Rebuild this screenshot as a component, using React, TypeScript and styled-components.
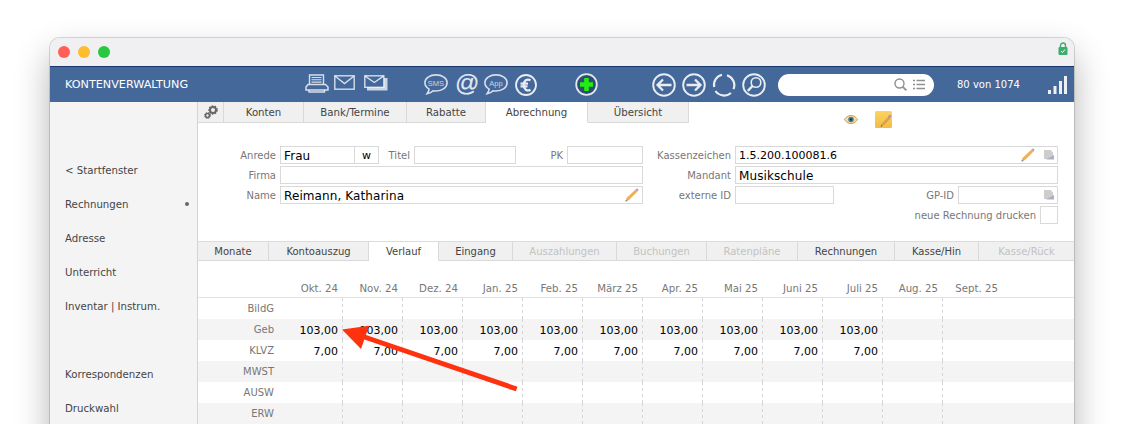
import React from 'react';
import styled, { createGlobalStyle } from 'styled-components';

const GlobalStyle = createGlobalStyle`
  html, body {
    margin: 0;
    height: 424px;
    overflow: hidden;
    background: #fff;
    font-family: "DejaVu Sans", Verdana, sans-serif;
  }
`;

const Page = styled.div`
  padding: 38px 0 0 50px;
  height: 424px;
  box-sizing: border-box;
  overflow: hidden;
`;

const Window = styled.div`
  width: 1024px;
  height: 500px;
  border-radius: 10px 10px 0 0;
  overflow: hidden;
  background: #fff;
  box-shadow: 0 0 0 1px rgba(0, 0, 0, 0.14), 0 16px 34px rgba(0, 0, 0, 0.3);
`;

const TitleBar = styled.div`
  height: 28px;
  background: #f0f0f2;
  display: flex;
  align-items: center;
  padding: 0 6px 0 8px;
  gap: 8px;
`;

const TrafficLight = styled.span<{ $color: string }>`
  width: 12px;
  height: 12px;
  border-radius: 50%;
  background: ${p => p.$color};
`;

const LockSlot = styled.span`
  margin-left: auto;
  display: flex;
  margin-top: -8px;
`;

const Header = styled.div`
  height: 36px;
  box-sizing: border-box;
  background: #44689a;
  border-top: 1px solid #17386b;
  display: flex;
  align-items: center;
  color: #fff;
`;

const AppTitle = styled.div`
  width: 255px;
  padding-left: 15px;
  box-sizing: border-box;
  font-size: 11.2px;
`;

const IconSlot = styled.span<{ $ml: number; $up?: number }>`
  display: flex;
  margin-left: ${p => p.$ml}px;
  margin-bottom: ${p => p.$up ?? 0}px;
`;

const AtGlyph = styled.span`
  width: 22px;
  text-align: center;
  font-family: "Liberation Sans", Arial, sans-serif;
  font-size: 24px;
  line-height: 22px;
  color: rgba(255, 255, 255, 0.85);
  -webkit-text-stroke: 0.2px rgba(255, 255, 255, 0.85);
`;

const SearchPill = styled.div`
  margin-left: 12px;
  width: 156px;
  height: 22px;
  border-radius: 11px;
  background: #fff;
  display: flex;
  align-items: center;
  justify-content: flex-end;
  gap: 6px;
  padding-right: 9px;
  box-sizing: border-box;
`;

const Counter = styled.div`
  margin-left: 23px;
  width: 91px;
  font-size: 10px;
`;

const Body = styled.div`
  display: flex;
  height: 436px;
`;

const Sidebar = styled.nav`
  width: 148px;
  box-sizing: border-box;
  background: #f4f4f4;
  border-right: 1px solid #d4d4d4;
  padding-top: 51px;
  display: flex;
  flex-direction: column;
`;

const NavItem = styled.div<{ $gapBefore?: boolean }>`
  height: 34px;
  margin-top: ${p => (p.$gapBefore ? '34px' : '0')};
  padding: 0 8px 0 15px;
  display: flex;
  align-items: center;
  justify-content: space-between;
  font-size: 10.2px;
  color: #444;
`;

const NavDot = styled.span`
  width: 4px;
  height: 4px;
  border-radius: 50%;
  background: #666;
`;

const Content = styled.main`
  flex: 1;
  min-width: 0;
`;

const TopTabRow = styled.div`
  display: flex;
  height: 21px;
`;

const TopTab = styled.div<{ $w: number; $active?: boolean }>`
  width: ${p => p.$w}px;
  box-sizing: border-box;
  display: flex;
  align-items: center;
  justify-content: center;
  font-size: 10.2px;
  color: #444;
  background: ${p => (p.$active ? '#fff' : '#f0f0f0')};
  border-right: 1px solid #d9d9d9;
  border-bottom: 1px solid ${p => (p.$active ? '#fff' : '#d9d9d9')};
`;

const TrayIcons = styled.div`
  display: flex;
  align-items: flex-start;
  padding: 9px 0 0 155px;
  gap: 17px;
  position: relative;
`;

const EyeSlot = styled.span`
  display: flex;
  margin-top: 4px;
`;

const FormArea = styled.section`
  height: 118px;
  box-sizing: border-box;
  padding-top: 23px;
  display: flex;
`;

const FormColumn = styled.div<{ $w: number; $label: number }>`
  width: ${p => p.$w}px;
  --label-width: ${p => p.$label}px;
  display: flex;
  flex-direction: column;
  gap: 2px;
`;

const FormRow = styled.div`
  display: flex;
  align-items: center;
  height: 18px;
`;

const FormLabel = styled.label<{ $w?: number }>`
  width: ${p => (p.$w ? `${p.$w}px` : 'var(--label-width)')};
  flex: none;
  text-align: right;
  padding-right: 4px;
  box-sizing: border-box;
  white-space: nowrap;
  font-size: 10px;
  color: #777;
`;

const Field = styled.div<{ $w?: number; $numeric?: boolean }>`
  ${p => (p.$w ? `width: ${p.$w}px; flex: none;` : 'flex: 1;')}
  height: 18px;
  box-sizing: border-box;
  border: 1px solid #d9d9d9;
  display: flex;
  align-items: center;
  padding: 1px 3px 0;
  gap: 7px;
  font-size: ${p => (p.$numeric ? '11px' : '12px')};
  letter-spacing: ${p => (p.$numeric ? '0' : '0.1px')};
  color: #000;
  white-space: nowrap;
`;

const GenderCell = styled.span`
  width: 23px;
  height: 16px;
  margin: -1px -3px 0 auto;
  border-left: 1px solid #d9d9d9;
  display: flex;
  align-items: center;
  justify-content: center;
  font-size: 11px;
`;

const FieldIcons = styled.span`
  margin: -1px 0 0 auto;
  display: flex;
  align-items: center;
  gap: 9px;
`;

const SubTabRow = styled.div`
  display: flex;
  height: 20px;
  box-sizing: border-box;
  border-top: 1px solid #dcdcdc;
  background: #f0f0f0;
`;

const SubTab = styled.div<{ $w: number; $active?: boolean; $disabled?: boolean }>`
  width: ${p => p.$w}px;
  height: 19px;
  box-sizing: border-box;
  display: flex;
  align-items: center;
  justify-content: center;
  font-size: 10px;
  color: ${p => (p.$disabled ? '#c2c2c2' : '#444')};
  background: ${p => (p.$active ? '#fff' : '#f0f0f0')};
  border-right: 1px solid #d9d9d9;
  border-bottom: 1px solid ${p => (p.$active ? '#fff' : '#d9d9d9')};
  &:last-child {
    border-right: none;
  }
`;

const Sheet = styled.div`
  position: relative;
`;

const MonthRow = styled.div`
  display: flex;
  height: 37px;
  box-sizing: border-box;
  padding: 22px 0 0 85px;
  border-bottom: 1px solid #e2e2e2;
`;

const MonthCell = styled.div`
  width: 60px;
  flex: none;
  box-sizing: border-box;
  padding-right: 5px;
  text-align: right;
  font-size: 10.2px;
  color: #777;
`;

const DataRow = styled.div<{ $alt: boolean }>`
  display: flex;
  height: 21px;
  align-items: stretch;
  background: ${p => (p.$alt ? '#f4f4f4' : '#fff')};
`;

const RowLabel = styled.div`
  width: 85px;
  flex: none;
  box-sizing: border-box;
  padding-right: 9px;
  text-align: right;
  line-height: 21px;
  font-size: 10px;
  color: #777;
`;

const ValueCell = styled.div<{ $last: boolean }>`
  width: 60px;
  flex: none;
  box-sizing: border-box;
  padding-right: 5px;
  text-align: right;
  line-height: 23px;
  font-size: 11px;
  color: #000;
  ${p =>
    p.$last
      ? ''
      : `background: repeating-linear-gradient(to bottom, #d6d6d6 0 3px, transparent 3px 6px) right top / 1px 100% no-repeat;`}
`;

const ArrowOverlay = styled.svg`
  position: absolute;
  left: 0;
  top: 0;
  pointer-events: none;
`;

const line = { fill: 'none', stroke: '#fff', strokeOpacity: 0.78 };

const PrinterIcon = () => (
  <svg width="24" height="19" viewBox="0 0 24 19" {...line} strokeWidth="1.4">
    <path d="M4.500 10V1h14v9" />
    <path d="M6.500 3.500h10M6.500 5.800h10M6.500 8.100h10" strokeWidth="1.100" />
    <path d="M3 10.500h17.500l2.500 2.500v3H1v-3z" strokeWidth="1.500" />
    <path d="M4 16v2h15.500v-2" />
  </svg>
);

const MailIcon = () => (
  <svg width="21" height="15" viewBox="0 0 21 15" {...line} strokeWidth="1.4">
    <rect x="0.800" y="0.800" width="19.400" height="13.400" />
    <path d="M1.200 1.200 10.500 8.500l9.300-7.300" />
  </svg>
);

const MailStackIcon = () => (
  <svg width="24" height="16" viewBox="0 0 24 16">
    <path d="M3 11v4.500h20.500V3H20v8z" fill="#fff" fillOpacity="0.72" />
    <rect x="0.800" y="0.800" width="19" height="11.500" fill="#44689a" stroke="#fff" strokeOpacity="0.78" strokeWidth="1.400" />
    <path d="M1.200 1.200 10.300 7.500l9.100-6.300" {...line} strokeWidth="1.400" />
  </svg>
);

const BubbleIcon = ({ label }: { label: string }) => (
  <svg width="24" height="21" viewBox="0 0 24 21">
    <path
      d="M12 .9C5.800.9.900 4.300.900 8.800c0 2.600 1.600 4.800 4.200 6.300-.2 1.800-.9 3.200-2 4.700 2.500-.4 4.700-1.500 6-3 1 .2 1.900.2 2.900.2 6.200 0 11.100-3.500 11.100-8.200S18.200.9 12 .9z"
      {...line}
      strokeWidth="1.600"
    />
    <text x="12" y="11.500" textAnchor="middle" fontSize="7.500" fill="#fff" fillOpacity="0.72" fontFamily="Liberation Sans, sans-serif">
      {label}
    </text>
  </svg>
);

const EuroIcon = () => (
  <svg width="22" height="22" viewBox="0 0 22 22" {...line} strokeOpacity="0.88">
    <circle cx="11" cy="11" r="10" strokeWidth="1.800" />
    <path d="M15.500 6.300c-3.500-2-6.800.3-6.800 4.700s3.300 6.700 6.800 4.700M5.500 9.700h7.500M5.500 12.300h7" strokeWidth="2.200" />
  </svg>
);

const PlusIcon = () => (
  <svg width="23" height="23" viewBox="0 0 23 23">
    <circle cx="11.500" cy="11.500" r="10.300" fill="#2f4d74" stroke="#fff" strokeOpacity="0.85" strokeWidth="1.800" />
    <path d="M9.200 5h4.600v4.200H18v4.600h-4.200V18H9.200v-4.200H5V9.200h4.200z" fill="#22ee11" />
  </svg>
);

const ArrowIcon = ({ dir }: { dir: 'left' | 'right' }) => (
  <svg width="24" height="24" viewBox="0 0 24 24" {...line} strokeOpacity="0.88">
    <circle cx="12" cy="12" r="10.800" strokeWidth="1.900" />
    <path
      d={dir === 'left' ? 'M19.500 12H5.500M11 6.500 5.500 12l5.500 5.500' : 'M4.500 12h14M13 6.500l5.500 5.500-5.500 5.500'}
      strokeWidth="2.300"
    />
  </svg>
);

const RefreshIcon = () => (
  <svg width="24" height="24" viewBox="0 0 24 24" {...line} strokeOpacity="0.88" strokeWidth="2.200">
    <path d="M15 2.200a10.500 10.500 0 0 1 6.500 14" />
    <path d="M19 20a10.500 10.500 0 0 1-15.500-2" />
    <path d="M2.200 14A10.500 10.500 0 0 1 10 1.700" />
  </svg>
);

const LoupeIcon = () => (
  <svg width="24" height="24" viewBox="0 0 24 24" {...line} strokeOpacity="0.88">
    <circle cx="12" cy="12" r="10.800" strokeWidth="1.900" />
    <circle cx="14" cy="9.500" r="4.800" strokeWidth="1.600" />
    <path d="M10.500 13 5.800 17.800" strokeWidth="2.400" />
  </svg>
);

const SearchGlyph = () => (
  <svg width="13" height="13" viewBox="0 0 13 13" fill="none" stroke="#8f8f8f" strokeWidth="1.400">
    <circle cx="5.500" cy="5.500" r="4.500" />
    <path d="m8.800 8.800 3.600 3.600" strokeWidth="1.800" />
  </svg>
);

const ListGlyph = () => (
  <svg width="12" height="11" viewBox="0 0 12 11" fill="none" stroke="#8f8f8f" strokeWidth="1.400">
    <path d="M0 1.500h2M3.500 1.500H12M0 5.500h2M3.500 5.500H12M0 9.500h2M3.500 9.500H12" />
  </svg>
);

const SignalIcon = () => (
  <svg width="19" height="18" viewBox="0 0 19 18" fill="#fff" fillOpacity="0.9">
    <rect x="0" y="14" width="3" height="4" />
    <rect x="5.500" y="10" width="3" height="8" />
    <rect x="11" y="5" width="3" height="13" />
    <rect x="16" y="0" width="3" height="18" />
  </svg>
);

const LockIcon = () => (
  <svg width="10" height="13" viewBox="0 0 10 13">
    <path d="M2.500 6V3.500a2.500 2.500 0 0 1 5 0V6" fill="none" stroke="#3cae6c" strokeWidth="1.400" />
    <rect x="0.500" y="5" width="9" height="8" rx="1" fill="#3cae6c" />
    <path d="m3 9 1.500 1.500L7 7.500" fill="none" stroke="#fff" strokeWidth="1" />
  </svg>
);

const GearsIcon = () => (
  <svg width="14" height="14" viewBox="0 0 14 14" fill="none" stroke="#666">
    <circle cx="9" cy="5" r="3" strokeWidth="2" />
    <circle cx="9" cy="5" r="4.200" strokeWidth="1.200" strokeDasharray="1.500 1.500" />
    <circle cx="3.500" cy="10.500" r="2" strokeWidth="1.600" />
    <circle cx="3.500" cy="10.500" r="3" strokeWidth="1" strokeDasharray="1.200 1.200" />
  </svg>
);

const EyeIcon = () => (
  <svg width="14" height="9" viewBox="0 0 14 9">
    <path d="M.5 4.500C3 1 5 .5 7 .5s4 .5 6.500 4C11 8 9 8.500 7 8.500S3 8 .5 4.500z" fill="#ecdcae" stroke="#c89a3c" strokeWidth="1" />
    <circle cx="7" cy="4.500" r="2.800" fill="#4f7f93" />
    <circle cx="7" cy="4.500" r="1.200" fill="#1f3642" />
  </svg>
);

const NoteIcon = () => (
  <svg width="17" height="17" viewBox="0 0 17 17">
    <defs>
      <linearGradient id="noteFill" x1="0" y1="0" x2="0" y2="1">
        <stop offset="0" stopColor="#fbd45e" />
        <stop offset="1" stopColor="#f3bb4a" />
      </linearGradient>
    </defs>
    <rect width="17" height="17" rx="1.500" fill="url(#noteFill)" />
    <path d="m6 15 1-2.500 6.500-7 2 2-7 7z" fill="#dda143" />
    <path d="m13 5.500 2-2 1.500 1.500-2 2z" fill="#a88cc8" />
    <path d="m5.500 16 .8-2.200 1.200 1z" fill="#666" />
  </svg>
);

const PencilIcon = () => (
  <svg width="14" height="14" viewBox="0 0 14 14">
    <path d="M.5 13.500 1.500 10 10.500 1.500 12.500 3.500 4 12z" fill="#eeb054" />
    <path d="M10.500 1.500 12 .3 13.700 2 12.500 3.500z" fill="#b49ac8" />
    <path d="M.5 13.500 1 11.800l1.700 1.200z" fill="#777" />
  </svg>
);

const DocIcon = () => (
  <svg width="10" height="10" viewBox="0 0 10 10">
    <path d="M0 0h6.500L9 2.500V9H0z" fill="#cdcdcd" />
    <path d="M2 9.500h8V5z" fill="#a9b2c4" />
  </svg>
);

const navTop = ['< Startfenster', 'Rechnungen', 'Adresse', 'Unterricht', 'Inventar | Instrum.'];
const topTabs: [string, number, boolean?][] = [
  ['Konten', 80],
  ['Bank/Termine', 103],
  ['Rabatte', 79],
  ['Abrechnung', 102, true],
  ['Übersicht', 101],
];
const subTabs: { label: string; w: number; active?: boolean; disabled?: boolean }[] = [
  { label: 'Monate', w: 71 },
  { label: 'Kontoauszug', w: 100 },
  { label: 'Verlauf', w: 70, active: true },
  { label: 'Eingang', w: 74 },
  { label: 'Auszahlungen', w: 104, disabled: true },
  { label: 'Buchungen', w: 90, disabled: true },
  { label: 'Ratenpläne', w: 91, disabled: true },
  { label: 'Rechnungen', w: 97 },
  { label: 'Kasse/Hin', w: 84 },
  { label: 'Kasse/Rück', w: 95, disabled: true },
];
const months = ['Okt. 24', 'Nov. 24', 'Dez. 24', 'Jan. 25', 'Feb. 25', 'März 25', 'Apr. 25', 'Mai 25', 'Juni 25', 'Juli 25', 'Aug. 25', 'Sept. 25'];
const rows: [string, string][] = [
  ['BildG', ''],
  ['Geb', '103,00'],
  ['KLVZ', '7,00'],
  ['MWST', ''],
  ['AUSW', ''],
  ['ERW', ''],
  ['', ''],
];

export default function App() {
  return (
    <>
      <GlobalStyle />
      <Page>
        <Window>
          <TitleBar>
            <TrafficLight $color="#ff5f57" />
            <TrafficLight $color="#febc2e" />
            <TrafficLight $color="#28c840" />
            <LockSlot><LockIcon /></LockSlot>
          </TitleBar>
          <Header>
            <AppTitle>KONTENVERWALTUNG</AppTitle>
            <IconSlot $ml={0} $up={2}><PrinterIcon /></IconSlot>
            <IconSlot $ml={5} $up={4}><MailIcon /></IconSlot>
            <IconSlot $ml={9} $up={3}><MailStackIcon /></IconSlot>
            <IconSlot $ml={36}><BubbleIcon label="SMS" /></IconSlot>
            <IconSlot $ml={7} $up={3}><AtGlyph>@</AtGlyph></IconSlot>
            <IconSlot $ml={7}><BubbleIcon label="App" /></IconSlot>
            <IconSlot $ml={7}><EuroIcon /></IconSlot>
            <IconSlot $ml={38}><PlusIcon /></IconSlot>
            <IconSlot $ml={54}><ArrowIcon dir="left" /></IconSlot>
            <IconSlot $ml={6}><ArrowIcon dir="right" /></IconSlot>
            <IconSlot $ml={6}><RefreshIcon /></IconSlot>
            <IconSlot $ml={6}><LoupeIcon /></IconSlot>
            <SearchPill>
              <SearchGlyph />
              <ListGlyph />
            </SearchPill>
            <Counter>80 von 1074</Counter>
            <SignalIcon />
          </Header>
          <Body>
            <Sidebar>
              {navTop.map(item => (
                <NavItem key={item}>
                  {item}
                  {item === 'Rechnungen' && <NavDot />}
                </NavItem>
              ))}
              <NavItem $gapBefore>Korrespondenzen</NavItem>
              <NavItem>Druckwahl</NavItem>
            </Sidebar>
            <Content>
              <TopTabRow>
                <TopTab $w={26}><GearsIcon /></TopTab>
                {topTabs.map(([label, w, active]) => (
                  <TopTab key={label} $w={w} $active={active}>{label}</TopTab>
                ))}
                <TrayIcons>
                  <EyeSlot><EyeIcon /></EyeSlot>
                  <NoteIcon />
                </TrayIcons>
              </TopTabRow>
              <FormArea>
                <FormColumn $w={445} $label={82}>
                  <FormRow>
                    <FormLabel>Anrede</FormLabel>
                    <Field $w={99}>Frau<GenderCell>w</GenderCell></Field>
                    <FormLabel $w={35}>Titel</FormLabel>
                    <Field $w={102} />
                    <FormLabel $w={51}>PK</FormLabel>
                    <Field />
                  </FormRow>
                  <FormRow>
                    <FormLabel>Firma</FormLabel>
                    <Field />
                  </FormRow>
                  <FormRow>
                    <FormLabel>Name</FormLabel>
                    <Field>Reimann, Katharina<FieldIcons><PencilIcon /></FieldIcons></Field>
                  </FormRow>
                </FormColumn>
                <FormColumn $w={415} $label={92}>
                  <FormRow>
                    <FormLabel>Kassenzeichen</FormLabel>
                    <Field $numeric>1.5.200.100081.6<FieldIcons><PencilIcon /><DocIcon /></FieldIcons></Field>
                  </FormRow>
                  <FormRow>
                    <FormLabel>Mandant</FormLabel>
                    <Field>Musikschule</Field>
                  </FormRow>
                  <FormRow>
                    <FormLabel>externe ID</FormLabel>
                    <Field $w={99} />
                    <FormLabel $w={124}>GP-ID</FormLabel>
                    <Field><FieldIcons><DocIcon /></FieldIcons></Field>
                  </FormRow>
                  <FormRow>
                    <FormLabel $w={397}>neue Rechnung drucken</FormLabel>
                    <Field $w={18} />
                  </FormRow>
                </FormColumn>
              </FormArea>
              <SubTabRow>
                {subTabs.map(tab => (
                  <SubTab key={tab.label} $w={tab.w} $active={tab.active} $disabled={tab.disabled}>
                    {tab.label}
                  </SubTab>
                ))}
              </SubTabRow>
              <Sheet>
                <MonthRow>
                  {months.map(month => <MonthCell key={month}>{month}</MonthCell>)}
                </MonthRow>
                {rows.map(([label, value], r) => (
                  <DataRow key={r} $alt={r % 2 === 1}>
                    <RowLabel>{label}</RowLabel>
                    {months.map((month, i) => (
                      <ValueCell key={month} $last={i === months.length - 1}>
                        {i < 10 ? value : ''}
                      </ValueCell>
                    ))}
                  </DataRow>
                ))}
                <ArrowOverlay width="340" height="140" viewBox="0 0 340 140">
                  <path d="M144 68.500 171 64.700 163 88z" fill="#ff3210" />
                  <path d="M165 75.500 318.700 128" stroke="#ff3210" strokeWidth="5" fill="none" />
                </ArrowOverlay>
              </Sheet>
            </Content>
          </Body>
        </Window>
      </Page>
    </>
  );
}
